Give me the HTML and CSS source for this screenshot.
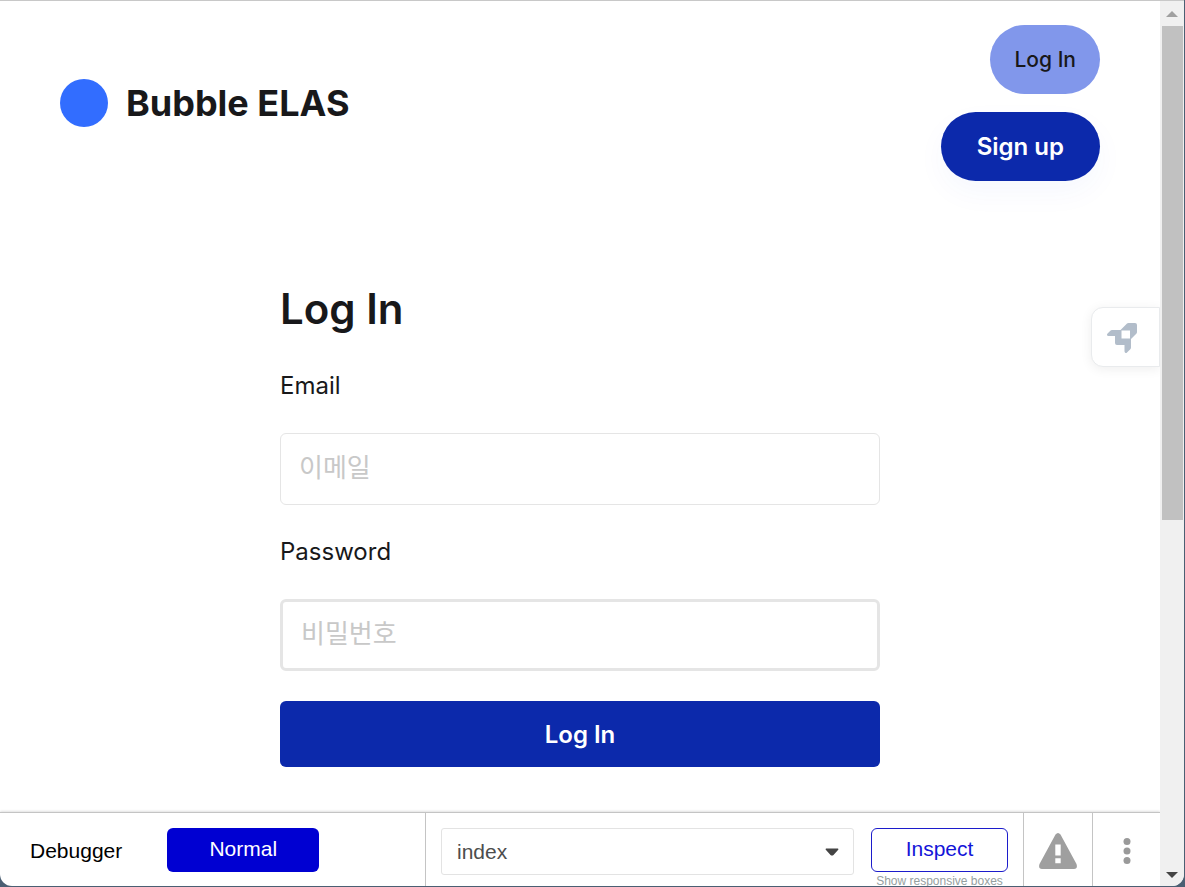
FILE: index.html
```html
<!DOCTYPE html>
<html lang="en">
<head>
<meta charset="utf-8">
<title>Bubble ELAS</title>
<link rel="stylesheet" href="styles.css">
</head>
<body>
<div class="window">
  <div class="page">
    <div class="content">
      <header class="header">
        <div class="brand">
          <span class="brand-dot"></span>
          <span class="brand-name">Bubble ELAS</span>
        </div>
        <nav class="nav">
          <button type="button" class="pill pill-login">Log In</button>
          <button type="button" class="pill pill-signup">Sign up</button>
        </nav>
      </header>
      <form class="login">
        <h1 class="title">Log In</h1>
        <label class="label" for="email">Email</label>
        <input class="field" id="email" type="email" placeholder="이메일">
        <label class="label" for="password">Password</label>
        <input class="field field-strong" id="password" type="password" placeholder="비밀번호">
        <button type="button" class="submit">Log In</button>
      </form>
      <button type="button" class="launch" aria-label="Launch">
        <svg width="32" height="32" viewBox="0 0 32 32">
          <path fill="#b2bdca" fill-rule="evenodd" d="M14.500 8L21 1.500Q21.500 1 22.500 1H29Q31 1 31 3V10Q31 11 30.300 11.700L25 17V25.500Q25 26.500 24.300 27.200L21 30.500Q20 31.500 19 30.500Q18.500 30 18.500 29V23H11Q9 23 9 21V14H2.500Q1 14 1 12.800Q1 12.200 1.600 11.600L4.300 8.800Q5 8 6 8ZM15.500 8.500V16.500H24V8.500Z"/>
        </svg>
      </button>
    </div>
    <footer class="debugger">
      <div class="mode">
        <span class="mode-label">Debugger</span>
        <button type="button" class="mode-button">Normal</button>
      </div>
      <div class="inspect">
        <div class="picker">
          <select class="select" aria-label="Page"><option>index</option></select>
          <svg class="caret" width="14" height="8" viewBox="0 0 14 8"><path fill="#444" d="M1 0.500H13Q14 1 13 2L8.500 7Q7 8 5.500 7L1 2Q0 1 1 .5Z"/></svg>
        </div>
        <div class="inspect-group">
          <button type="button" class="inspect-button">Inspect</button>
          <span class="hint">Show responsive boxes</span>
        </div>
      </div>
      <button type="button" class="tool tool-alert" aria-label="Issues">
        <svg width="40" height="38" viewBox="0 0 40 38">
          <path fill="#9f9f9f" fill-rule="evenodd" d="M17.500 2.500Q20 -.5 22.500 2.500L38.500 32Q40 37 36 37H4Q0 37 1.500 32ZM17.300 12.500V23.500H22.700V12.500ZM17.300 26.200V31.200H22.700V26.200Z"/>
        </svg>
      </button>
      <button type="button" class="tool tool-menu" aria-label="More">
        <svg width="8" height="28" viewBox="0 0 8 28" fill="#9a9a9a"><circle cx="4" cy="4.500" r="3.500"/><circle cx="4" cy="14" r="3.500"/><circle cx="4" cy="23.500" r="3.500"/></svg>
      </button>
    </footer>
  </div>
  <div class="scrollbar">
    <svg class="arrow" width="12" height="6" viewBox="0 0 12 6"><path fill="#a0a0a0" d="M6 0L12 6H0Z"/></svg>
    <div class="track"><div class="thumb"></div></div>
    <svg class="arrow" width="12" height="6" viewBox="0 0 12 6"><path fill="#444" d="M0 0H12L6 6Z"/></svg>
  </div>
</div>
</body>
</html>
```
FILE: styles.css
```css
* {
  box-sizing: border-box;
}

body {
  margin: 0;
  height: 100vh;
  padding: 0 1px 1px 0;
  background: #4b5f73;
  font-family: Inter, "Noto Sans CJK KR", sans-serif;
  color: #18181a;
}

button {
  border: 0;
  padding: 0;
  font-family: inherit;
  cursor: pointer;
}

svg {
  display: block;
}

.window {
  display: flex;
  height: 100%;
  overflow: hidden;
  border-top: 1px solid #c8c8c8;
  border-radius: 0 0 12px 12px;
  background: #fff;
}

.page {
  display: flex;
  flex: 1;
  flex-direction: column;
  min-width: 0;
}

.content {
  position: relative;
  flex: 1;
  min-height: 0;
  overflow: hidden;
}

.header {
  display: flex;
  align-items: center;
  justify-content: space-between;
  padding: 24px 60px;
}

.brand {
  display: flex;
  align-items: center;
  gap: 18px;
}

.brand-dot {
  width: 48px;
  height: 48px;
  border-radius: 50%;
  background: #326dff;
}

.brand-name {
  font-size: 36px;
  font-weight: 700;
}

.nav {
  display: flex;
  flex-direction: column;
  align-items: flex-end;
  gap: 18px;
}

.pill {
  height: 69px;
  border-radius: 36px;
  font-weight: 600;
}

.pill-login {
  padding: 0 24px;
  background: #8197eb;
  color: #18181a;
  font-size: 21px;
  font-weight: 500;
}

.pill-signup {
  padding: 0 36px;
  background: #0c29ab;
  color: #fff;
  font-size: 24px;
  box-shadow: 0 12px 30px rgba(12, 80, 220, 0.04);
}

.login {
  display: flex;
  flex-direction: column;
  max-width: 600px;
  margin: 80px auto 0;
}

.title {
  margin: 0 0 35px;
  font-size: 42px;
  font-weight: 600;
  line-height: 48px;
}

.label {
  margin-bottom: 29px;
  font-size: 24px;
  line-height: 36px;
}

.field {
  width: 100%;
  height: 72px;
  margin-bottom: 29px;
  padding: 0 18px 4px;
  border: 1px solid #e5e5e5;
  border-radius: 6px;
  background: #fff;
  color: #18181a;
  font-family: inherit;
  font-size: 26px;
}

.field-strong {
  margin-bottom: 30px;
  border-width: 3px;
}

.field::placeholder {
  color: #c8c8c8;
  opacity: 1;
}

.submit {
  height: 66px;
  border-radius: 6px;
  background: #0c29ab;
  color: #fff;
  font-size: 24px;
  font-weight: 600;
}

.launch {
  position: absolute;
  top: 306px;
  right: 0;
  display: flex;
  align-items: center;
  width: 69px;
  height: 60px;
  padding: 2px 0 0 14px;
  border: 1px solid #e9ebed;
  border-radius: 12px 0 0 12px;
  background: #fff;
  box-shadow: 0 2px 12px rgba(0, 0, 0, 0.07);
}

.debugger {
  display: flex;
  height: 74px;
  border-top: 1px solid #c4c4c4;
  box-shadow: 0 -1px 2px rgba(0, 0, 0, 0.12);
  font-family: "Liberation Sans", Arial, sans-serif;
}

.mode {
  display: flex;
  gap: 45px;
  width: 426px;
  padding: 15px 30px;
  border-right: 1px solid #c4c4c4;
}

.mode-label {
  color: #000;
  font-size: 21px;
  line-height: 46px;
}

.mode-button {
  width: 152px;
  height: 44px;
  padding-bottom: 2px;
  border-radius: 6px;
  background: #0000d2;
  color: #fff;
  font-size: 21px;
}

.inspect {
  display: flex;
  flex: 1;
  gap: 17px;
  padding: 15px 15px 0;
}

.picker {
  position: relative;
  flex: 1;
}

.select {
  width: 100%;
  height: 47px;
  padding: 0 15px;
  border: 1px solid #e3e3e3;
  border-radius: 3px;
  background: #fff;
  color: #4d4d4d;
  font-family: inherit;
  font-size: 21px;
  appearance: none;
}

.caret {
  position: absolute;
  top: 20px;
  right: 15px;
  pointer-events: none;
}

.inspect-group {
  display: flex;
  flex-direction: column;
  align-items: center;
  width: 137px;
}

.inspect-button {
  flex-shrink: 0;
  width: 100%;
  height: 44px;
  padding-bottom: 2px;
  border: 1px solid #1c1ccb;
  border-radius: 6px;
  background: #fff;
  color: #1414d8;
  font-size: 21px;
}

.hint {
  color: #95a0a0;
  font-size: 12px;
  line-height: 18px;
  white-space: nowrap;
}

.tool {
  display: flex;
  align-items: center;
  justify-content: center;
  border-left: 1px solid #c4c4c4;
  background: #fff;
}

.tool-alert {
  width: 69px;
}

.tool-menu {
  width: 68px;
}

.tool svg {
  margin-top: 2px;
}

.scrollbar {
  display: flex;
  flex-direction: column;
  align-items: center;
  justify-content: space-between;
  width: 24px;
  padding: 10px 0 8px;
  background: #f0f0f0;
}

.track {
  flex: 1;
  align-self: stretch;
  margin: 9px 1px 9px 2px;
}

.thumb {
  height: 59%;
  background: #c1c1c1;
}
```
